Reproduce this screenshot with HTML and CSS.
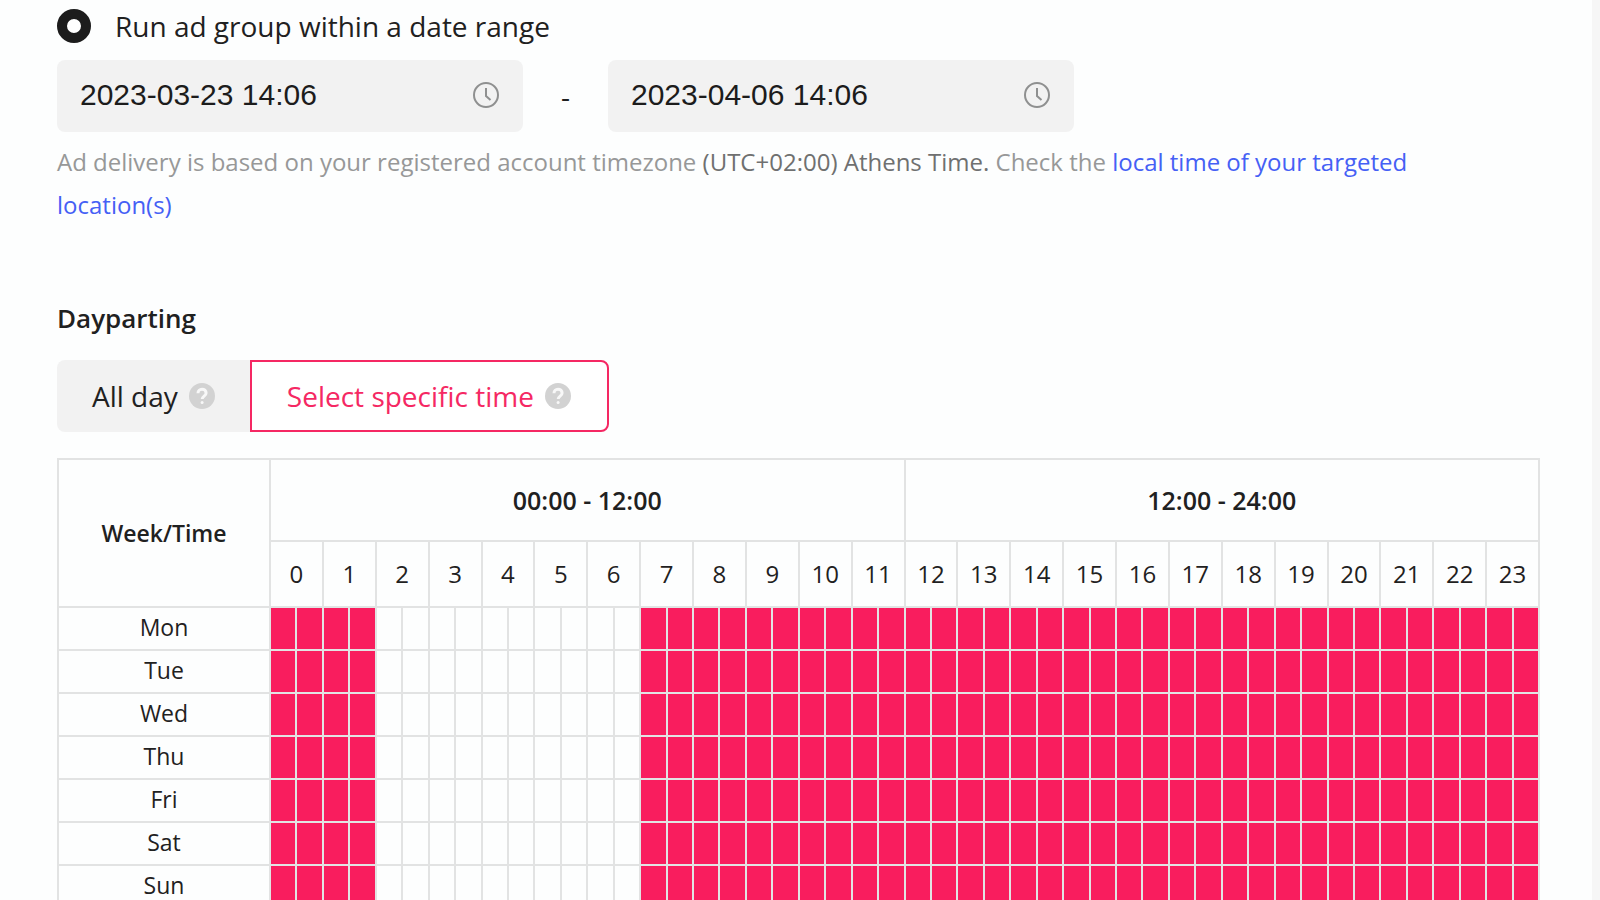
FILE: index.html
```
<!DOCTYPE html>
<html lang="en">
<head>
  <meta charset="utf-8">
  <title>Ad group schedule</title>
  <link rel="stylesheet" href="styles.css">
</head>
<body>
  <main class="panel">
    <label class="radio-row">
      <input class="radio" type="radio" name="schedule" checked>
      <span>Run ad group within a date range</span>
    </label>

    <div class="range">
      <div class="date-field">
        <input class="date-input" type="text" aria-label="Start time" value="2023-03-23 14:06">
        <svg class="clock" viewBox="0 0 26 26" aria-hidden="true"><circle cx="13" cy="13" r="12"/><path d="M13 6v8l4.500 4"/></svg>
      </div>
      <span class="range-dash">-</span>
      <div class="date-field">
        <input class="date-input" type="text" aria-label="End time" value="2023-04-06 14:06">
        <svg class="clock" viewBox="0 0 26 26" aria-hidden="true"><circle cx="13" cy="13" r="12"/><path d="M13 6v8l4.500 4"/></svg>
      </div>
    </div>

    <p class="note">Ad delivery is based on your registered account timezone <span class="zone">(UTC+02:00) Athens Time.</span> Check the <a class="link" href="#">local time of your targeted location(s)</a></p>

    <h2 class="heading">Dayparting</h2>

    <div class="segmented">
      <button class="segment" type="button">All day
        <svg class="help" viewBox="0 0 26 26" aria-hidden="true"><circle cx="13" cy="13" r="13"/><path d="M9 10.200c0-2.400 1.700-4 4-4s4.100 1.500 4.100 3.700c0 3.100-3.900 3.200-3.900 6.200"/><circle class="dot" cx="13.100" cy="19.600" r="1.500"/></svg>
      </button>
      <button class="segment segment-active" type="button">Select specific time
        <svg class="help" viewBox="0 0 26 26" aria-hidden="true"><circle cx="13" cy="13" r="13"/><path d="M9 10.200c0-2.400 1.700-4 4-4s4.100 1.500 4.100 3.700c0 3.100-3.900 3.200-3.900 6.200"/><circle class="dot" cx="13.100" cy="19.600" r="1.500"/></svg>
      </button>
    </div>

    <table class="schedule">
      <colgroup><col class="day-col"><col span="48"></colgroup>
      <thead>
        <tr class="period-row">
          <th class="corner" rowspan="2" scope="col">Week/Time</th>
          <th colspan="24" scope="colgroup">00:00 - 12:00</th>
          <th colspan="24" scope="colgroup">12:00 - 24:00</th>
        </tr>
        <tr class="hour-row" id="hours"></tr>
      </thead>
      <tbody id="days"></tbody>
    </table>
  </main>
  <script src="schedule.js"></script>
</body>
</html>
```
FILE: styles.css
```
* {
  box-sizing: border-box;
}

body {
  margin: 0;
  height: 100vh;
  overflow: hidden;
  background: #f6f6f6;
  color: #1f2121;
  font-family: "Open Sans", "Noto Sans", sans-serif;
  font-size: 28px;
}

.panel {
  min-height: 100vh;
  margin-right: 8px;
  padding: 6px 52px 0 57px;
  background: #fdfefe;
}

.radio-row {
  display: flex;
  align-items: center;
  gap: 24px;
  line-height: 40px;
}

.radio {
  appearance: none;
  width: 34px;
  height: 34px;
  margin: 0;
  border: 10px solid #1c1c1c;
  border-radius: 50%;
  background: #fff;
}

.range {
  display: flex;
  align-items: center;
  margin-top: 14px;
}

.date-field {
  display: flex;
  align-items: center;
  width: 466px;
  height: 72px;
  padding: 0 24px 3px 23px;
  border-radius: 8px;
  background: #f2f2f2;
}

.date-input {
  flex: 1;
  min-width: 0;
  padding: 0;
  border: 0;
  outline: 0;
  background: none;
  color: #1c1c1c;
  font: 30px "Liberation Sans", Arial, sans-serif;
}

.clock {
  width: 26px;
  height: 26px;
  fill: none;
  stroke: #8f9090;
  stroke-width: 2;
}

.range-dash {
  width: 85px;
  text-align: center;
}

.note {
  margin: 8px 0 0;
  padding-right: 40px;
  color: #979898;
  font-size: 24px;
  line-height: 43px;
}

.zone {
  color: #6f7070;
}

.link {
  color: #4560f5;
  text-decoration: none;
}

.heading {
  margin: 72px 0 0;
  font-size: 26px;
  font-weight: 600;
  line-height: 40px;
}

.segmented {
  display: flex;
  margin-top: 22px;
}

.segment {
  display: flex;
  align-items: center;
  gap: 11px;
  height: 72px;
  padding: 0 35px;
  border: 0;
  border-radius: 8px 0 0 8px;
  background: #f2f2f2;
  color: #1f2121;
  font: inherit;
}

.segment-active {
  padding: 0 36px 0 35px;
  border: 2px solid #f52863;
  border-radius: 0 8px 8px 0;
  background: #fff;
  color: #f52863;
}

.help {
  width: 26px;
  height: 26px;
  fill: #d2d2d2;
}

.help path {
  fill: none;
  stroke: #f8f8f8;
  stroke-width: 3;
}

.help .dot {
  fill: #f8f8f8;
}

.schedule {
  width: 100%;
  margin-top: 26px;
  border-collapse: collapse;
  table-layout: fixed;
  font-size: 24px;
  text-align: center;
}

.schedule th,
.schedule td {
  padding: 0;
  border: 2px solid #e2e3e3;
  font-weight: 400;
  line-height: 32px;
}

.schedule .period-row th {
  font-size: 25px;
  font-weight: 600;
}

.schedule .period-row .corner {
  font-size: 23px;
}

.day-col {
  width: 212px;
}

.period-row {
  height: 82px;
}

.hour-row {
  height: 66px;
}

.day-row {
  height: 43px;
}

.schedule .day-row th {
  padding-bottom: 3px;
  font-size: 23px;
}

.schedule .on {
  background: #f91d5e;
}
```
FILE: schedule.js
```
const hours = document.getElementById('hours');
for (let h = 0; h < 24; h++) {
  const th = document.createElement('th');
  th.colSpan = 2;
  th.scope = 'col';
  th.textContent = h;
  hours.append(th);
}

// Each hour has two half-hour slots; 02:00 to 07:00 is off.
const days = document.getElementById('days');
for (const day of ['Mon', 'Tue', 'Wed', 'Thu', 'Fri', 'Sat', 'Sun']) {
  const row = document.createElement('tr');
  row.className = 'day-row';
  const th = document.createElement('th');
  th.scope = 'row';
  th.textContent = day;
  row.append(th);
  for (let slot = 0; slot < 48; slot++) {
    const td = document.createElement('td');
    if (slot < 4 || slot >= 14) td.className = 'on';
    row.append(td);
  }
  days.append(row);
}
```
